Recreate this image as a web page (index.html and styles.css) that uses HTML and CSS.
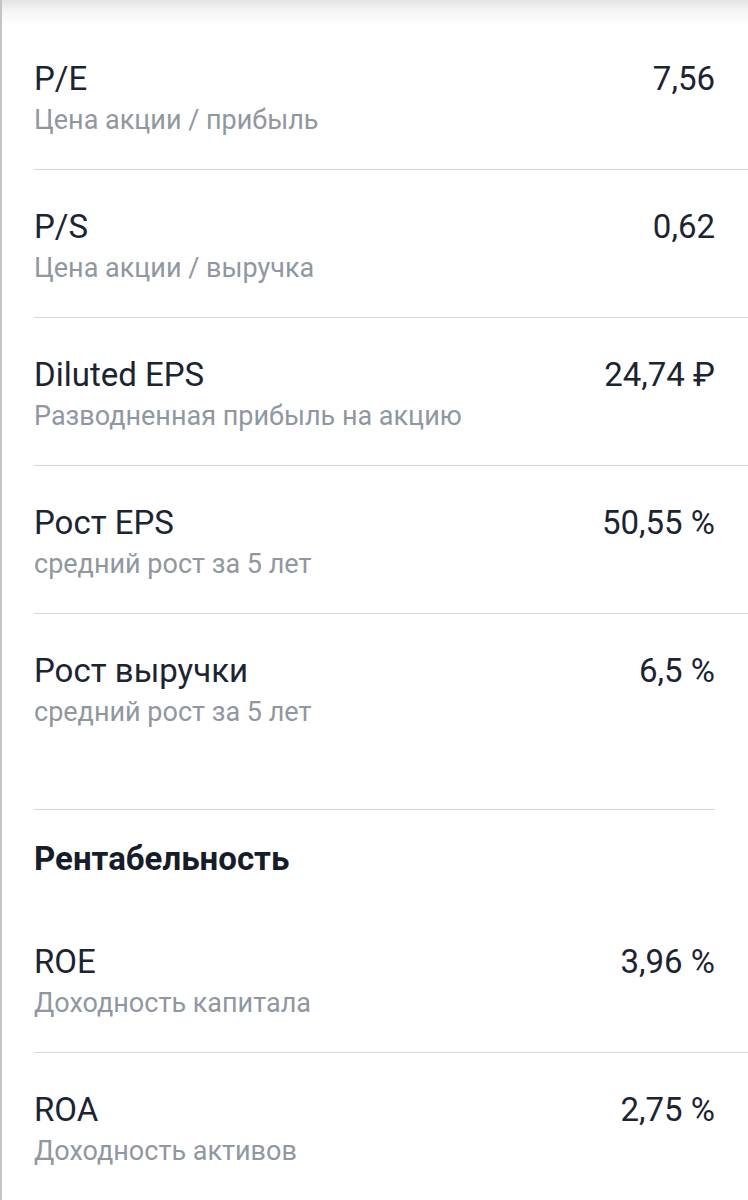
FILE: index.html
```html
<!DOCTYPE html>
<html lang="ru">
<head>
<meta charset="utf-8">
<title>Мультипликаторы</title>
<link rel="stylesheet" href="styles.css">
</head>
<body>
<div class="page">
  <div class="top-shade"></div>
  <section class="section first">
    <div class="row">
      <div class="info">
        <div class="title">P/E</div>
        <div class="sub">Цена акции / прибыль</div>
      </div>
      <div class="value">7,56</div>
    </div>
    <div class="row">
      <div class="info">
        <div class="title">P/S</div>
        <div class="sub">Цена акции / выручка</div>
      </div>
      <div class="value">0,62</div>
    </div>
    <div class="row">
      <div class="info">
        <div class="title">Diluted EPS</div>
        <div class="sub">Разводненная прибыль на акцию</div>
      </div>
      <div class="value">24,74 ₽</div>
    </div>
    <div class="row">
      <div class="info">
        <div class="title">Рост EPS</div>
        <div class="sub">средний рост за 5 лет</div>
      </div>
      <div class="value">50,55 %</div>
    </div>
    <div class="row last">
      <div class="info">
        <div class="title">Рост выручки</div>
        <div class="sub">средний рост за 5 лет</div>
      </div>
      <div class="value">6,5 %</div>
    </div>
  </section>
  <div class="section-divider"></div>
  <h2 class="heading">Рентабельность</h2>
  <section class="section">
    <div class="row">
      <div class="info">
        <div class="title">ROE</div>
        <div class="sub">Доходность капитала</div>
      </div>
      <div class="value">3,96 %</div>
    </div>
    <div class="row">
      <div class="info">
        <div class="title">ROA</div>
        <div class="sub">Доходность активов</div>
      </div>
      <div class="value">2,75 %</div>
    </div>
  </section>
</div>
</body>
</html>
```

FILE: styles.css
```css
html, body {
  margin: 0;
  padding: 0;
  background: #ffffff;
}

body {
  font-family: Roboto, "Noto Sans", "Liberation Sans", sans-serif;
  color: #1c2431;
}

.page {
  position: relative;
  min-height: 1200px;
  border-left: 2px solid #c4c4c4;
  box-sizing: border-box;
  overflow: hidden;
}

.top-shade {
  position: absolute;
  left: 0;
  right: 0;
  top: 0;
  height: 26px;
  background: linear-gradient(to bottom, #e3e3e3 0%, #f4f4f4 40%, rgba(255,255,255,0) 100%);
  pointer-events: none;
}

.section.first {
  padding-top: 22px;
  padding-bottom: 48px;
}

.row {
  display: flex;
  justify-content: space-between;
  align-items: flex-start;
  margin-left: 32px;
  padding: 37px 33px 31px 0;
  border-bottom: 1px solid #d6d7d9;
}

.row.last {
  border-bottom: none;
}

.title {
  font-size: 33px;
  line-height: 40px;
  color: #1c2431;
}

.sub {
  margin-top: 3px;
  font-size: 27px;
  line-height: 36px;
  color: #9097a0;
}

.value {
  font-size: 33px;
  line-height: 40px;
  color: #1c2431;
  white-space: nowrap;
}

.section-divider {
  margin: 0 33px 0 32px;
  border-top: 1px solid #d6d7d9;
}

.heading {
  margin: 0;
  padding: 29px 32px 26px 32px;
  font-size: 33px;
  line-height: 40px;
  font-weight: 700;
  color: #161d29;
}
```
